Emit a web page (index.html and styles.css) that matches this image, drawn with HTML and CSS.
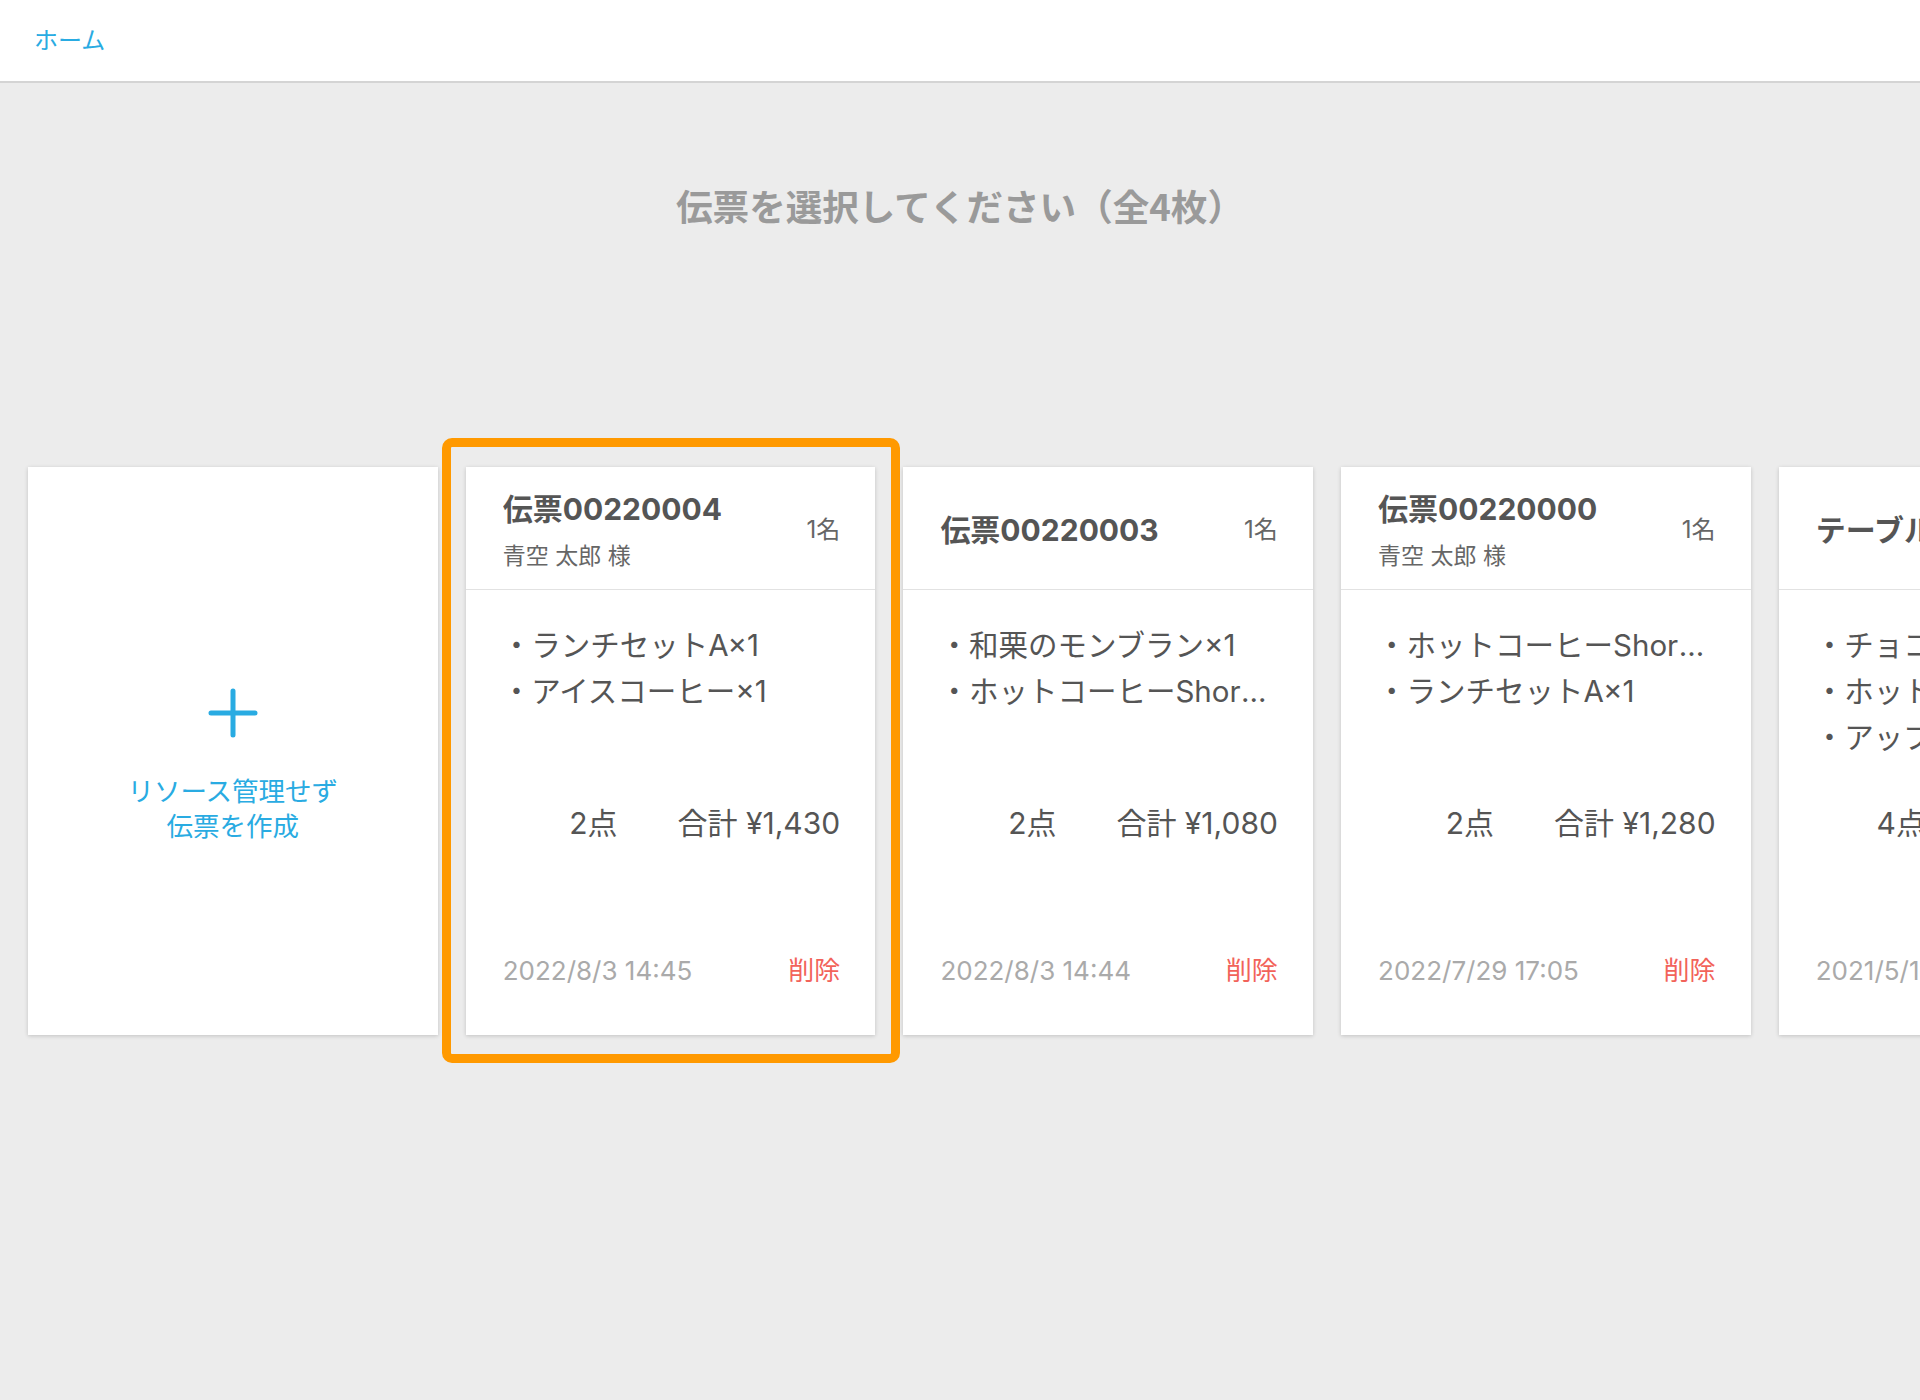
FILE: index.html
```html
<!DOCTYPE html>
<html lang="ja">
<head>
<meta charset="utf-8">
<title>伝票選択</title>
<link rel="stylesheet" href="styles.css">
</head>
<body>
<header class="topbar">
  <a class="home-link" href="#">ホーム</a>
</header>
<main class="page">
  <h1 class="page-title">伝票を選択してください（全4枚）</h1>
  <div class="slip-row">
    <div class="card card-new">
      <svg class="plus-icon" viewBox="0 0 50 50" width="50" height="50" aria-hidden="true">
        <path d="M25 3 V47 M3 25 H47" stroke="#29abe2" stroke-width="5" stroke-linecap="round" fill="none"/>
      </svg>
      <p class="new-label">リソース管理せず<br>伝票を作成</p>
    </div>

    <div class="card slip is-selected">
      <div class="slip-head">
        <div class="slip-id">
          <div class="slip-title">伝票00220004</div>
          <div class="slip-guest">青空 太郎 様</div>
        </div>
        <div class="slip-people">1名</div>
      </div>
      <ul class="slip-items">
        <li>・ランチセットA×1</li>
        <li>・アイスコーヒー×1</li>
      </ul>
      <div class="slip-sum"><span>2点</span><span>合計 ¥1,430</span></div>
      <div class="slip-foot"><span class="slip-date">2022/8/3 14:45</span><span class="slip-delete">削除</span></div>
    </div>

    <div class="card slip">
      <div class="slip-head">
        <div class="slip-id">
          <div class="slip-title">伝票00220003</div>
        </div>
        <div class="slip-people">1名</div>
      </div>
      <ul class="slip-items">
        <li>・和栗のモンブラン×1</li>
        <li>・ホットコーヒーShort×1</li>
      </ul>
      <div class="slip-sum"><span>2点</span><span>合計 ¥1,080</span></div>
      <div class="slip-foot"><span class="slip-date">2022/8/3 14:44</span><span class="slip-delete">削除</span></div>
    </div>

    <div class="card slip">
      <div class="slip-head">
        <div class="slip-id">
          <div class="slip-title">伝票00220000</div>
          <div class="slip-guest">青空 太郎 様</div>
        </div>
        <div class="slip-people">1名</div>
      </div>
      <ul class="slip-items">
        <li>・ホットコーヒーShort×1</li>
        <li>・ランチセットA×1</li>
      </ul>
      <div class="slip-sum"><span>2点</span><span>合計 ¥1,280</span></div>
      <div class="slip-foot"><span class="slip-date">2022/7/29 17:05</span><span class="slip-delete">削除</span></div>
    </div>

    <div class="card slip">
      <div class="slip-head">
        <div class="slip-id">
          <div class="slip-title">テーブル1</div>
        </div>
        <div class="slip-people">2名</div>
      </div>
      <ul class="slip-items">
        <li>・チョコレートケーキ×2</li>
        <li>・ホットコーヒーShort×1</li>
        <li>・アップルパイ×1</li>
      </ul>
      <div class="slip-sum"><span>4点</span><span>合計 ¥2,860</span></div>
      <div class="slip-foot"><span class="slip-date">2021/5/12 12:30</span><span class="slip-delete">削除</span></div>
    </div>
  </div>
</main>
</body>
</html>
```

FILE: styles.css
```css
html, body {
  margin: 0;
  padding: 0;
}

body {
  background: #ececec;
  font-family: "Inter", "Noto Sans CJK JP", sans-serif;
  color: #555;
  overflow: hidden;
  width: 1920px;
  height: 1400px;
}

.topbar {
  height: 81px;
  background: #fff;
  border-bottom: 2px solid #d4d4d4;
  display: flex;
  align-items: center;
  padding-left: 34px;
}

.home-link {
  color: #29abe2;
  text-decoration: none;
  font-family: "Noto Sans CJK JP", sans-serif;
  font-size: 24px;
  line-height: 30px;
  margin-top: -4px;
}

.page {
  padding-top: 98px;
}

.page-title {
  margin: 0;
  text-align: center;
  font-family: "Noto Sans CJK JP", sans-serif;
  font-size: 36.6px;
  line-height: 50px;
  font-weight: 700;
  color: #9a9a9a;
}

.slip-row {
  margin-top: 236px;
  display: flex;
  gap: 28.2px;
  padding-left: 28px;
}

.card {
  flex: 0 0 409.5px;
  width: 409.5px;
  min-width: 0;
  height: 568px;
  background: #fff;
  box-shadow: 0 1px 4px rgba(0, 0, 0, 0.18);
  box-sizing: border-box;
}

.card-new {
  display: flex;
  flex-direction: column;
  align-items: center;
  justify-content: center;
  padding-top: 28px;
}

.plus-icon {
  display: block;
}

.new-label {
  margin: 34px 0 0;
  text-align: center;
  color: #29abe2;
  font-family: "Noto Sans CJK JP", sans-serif;
  font-size: 26.5px;
  line-height: 35px;
}

.slip {
  display: flex;
  flex-direction: column;
  position: relative;
}

.slip.is-selected::after {
  content: "";
  position: absolute;
  top: -29px;
  left: -24px;
  right: -25px;
  bottom: -28px;
  border: 9px solid #ff9900;
  border-radius: 10px;
  pointer-events: none;
}

.slip-head {
  height: 123px;
  box-sizing: border-box;
  flex: 0 0 auto;
  display: flex;
  align-items: center;
  justify-content: space-between;
  padding: 3px 35px 0 37px;
  border-bottom: 1px solid #e2e2e2;
}

.slip-id {
  min-width: 0;
  overflow: hidden;
  white-space: nowrap;
}

.slip-title {
  font-size: 30px;
  line-height: 40px;
  font-weight: 700;
  color: #555;
}

.slip-guest {
  margin-top: 13px;
  font-size: 23px;
  line-height: 28px;
  color: #666;
}

.slip-people {
  font-size: 24px;
  line-height: 30px;
  color: #666;
  flex: 0 0 auto;
}

.slip-items {
  list-style: none;
  margin: 0;
  padding: 32px 46px 0 36px;
  height: 138px;
  flex: 0 0 auto;
  min-width: 0;
}

.slip-items li {
  font-size: 29.5px;
  line-height: 46px;
  color: #555;
  white-space: nowrap;
  overflow: hidden;
  text-overflow: ellipsis;
}

.slip-sum {
  margin-top: 43px;
  display: flex;
  justify-content: flex-end;
  gap: 60px;
  padding-right: 35px;
  font-size: 30px;
  line-height: 40px;
  color: #555;
}

.slip-foot {
  margin-top: auto;
  padding: 0 35px 46px 37px;
  display: flex;
  justify-content: space-between;
  font-size: 26px;
  line-height: 36px;
}

.slip-date {
  color: #aaa;
  white-space: nowrap;
}

.slip-delete {
  color: #f2635a;
}
```
